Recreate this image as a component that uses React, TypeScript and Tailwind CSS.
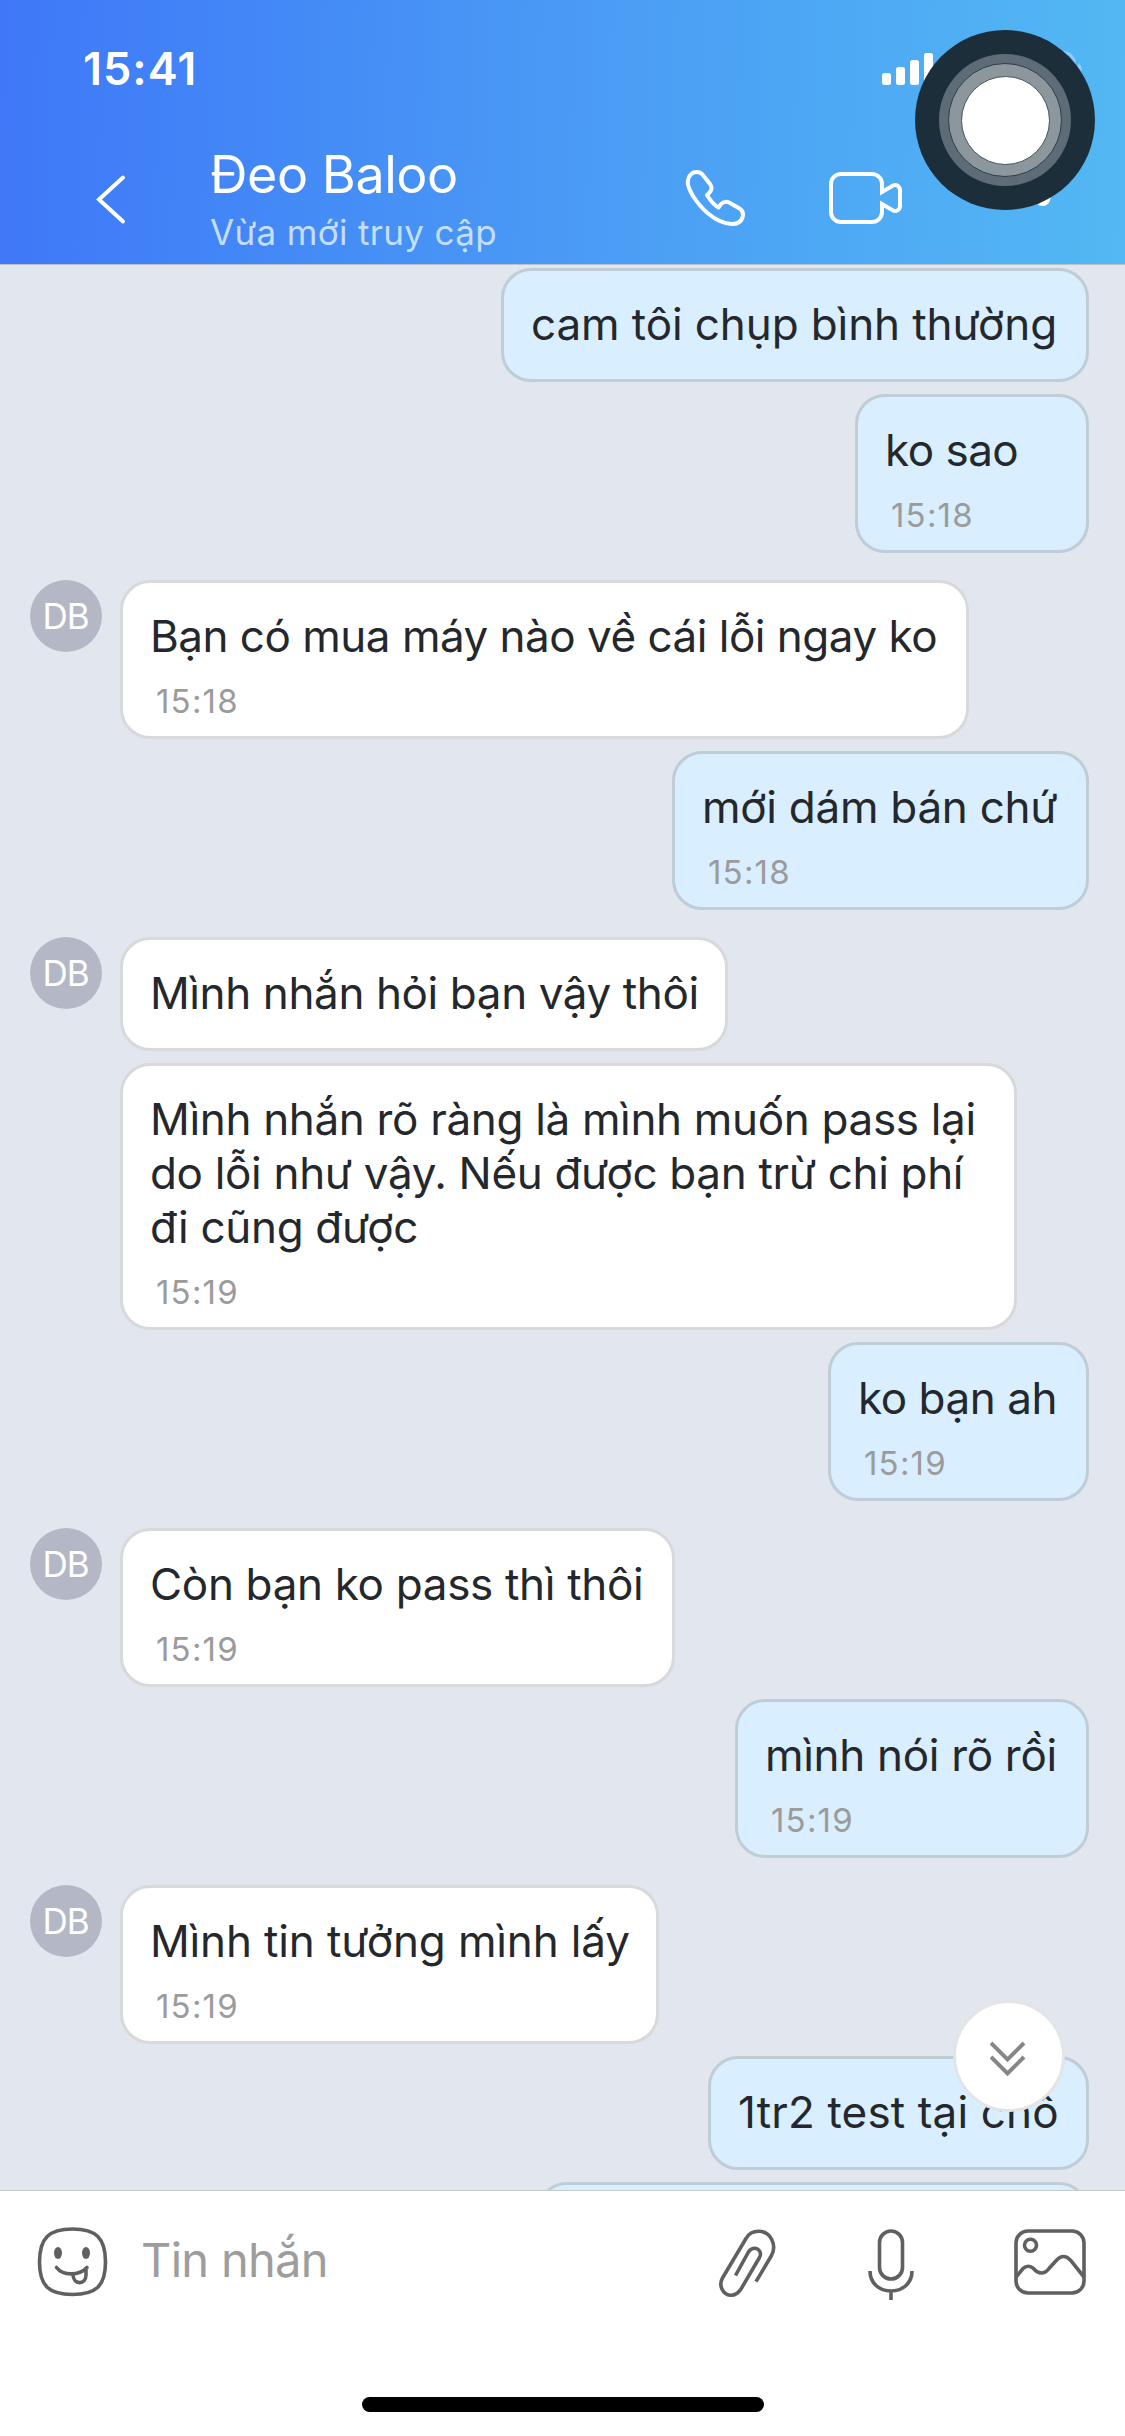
import { clsx } from 'clsx'

interface Message {
  id: number
  text: string
  time?: string
  mine?: boolean
  avatar?: boolean
  className?: string
}

const messages: Message[] = [
  { id: 1, text: 'cam tôi chụp bình thường', mine: true, className: 'w-[588px] tracking-[-0.1px]' },
  { id: 2, text: 'ko sao', time: '15:18', mine: true, className: 'w-[234px] tracking-[-0.5px]' },
  { id: 3, text: 'Bạn có mua máy nào về cái lỗi ngay ko', time: '15:18', avatar: true, className: 'w-[849px] tracking-[-0.5px]' },
  { id: 4, text: 'mới dám bán chứ', time: '15:18', mine: true, className: 'w-[417px] tracking-[-0.26px]' },
  { id: 5, text: 'Mình nhắn hỏi bạn vậy thôi', avatar: true, className: 'w-[608px] tracking-[-0.39px]' },
  {
    id: 6,
    text: 'Mình nhắn rõ ràng là mình muốn pass lại\ndo lỗi như vậy. Nếu được bạn trừ chi phí\nđi cũng được',
    time: '15:19',
    className: 'w-[897px] tracking-[-0.33px]',
  },
  { id: 7, text: 'ko bạn ah', time: '15:19', mine: true, className: 'w-[261px] tracking-[-0.45px]' },
  { id: 8, text: 'Còn bạn ko pass thì thôi', time: '15:19', avatar: true, className: 'w-[555px] tracking-[-0.32px]' },
  { id: 9, text: 'mình nói rõ rồi', time: '15:19', mine: true, className: 'w-[354px] tracking-[-0.31px]' },
  { id: 10, text: 'Mình tin tưởng mình lấy', time: '15:19', avatar: true, className: 'w-[539px] tracking-[-0.14px]' },
  { id: 11, text: '1tr2 test tại chỗ', mine: true, className: 'w-[381px] tracking-[0.15px]' },
  { id: 12, text: '', mine: true, className: 'w-[552px] h-[114px]' },
]

export default function App() {
  return (
    <main className="relative flex h-[2436px] w-[1125px] flex-col overflow-hidden bg-[#e2e6ef] font-['Inter','Noto_Sans',sans-serif]">
      <Header />

      {/* Messages */}
      <section className="relative h-[1925px] overflow-hidden pt-[3px]">
        <div className="flex flex-col gap-3">
          {messages.map((message) => (
            <MessageRow key={message.id} message={message} />
          ))}
        </div>

        <button className="absolute right-[60px] bottom-[78px] flex size-28 items-center justify-center rounded-full border-3 border-[#e3e4e6] bg-white">
          <svg className="mt-1.5 mr-0.5 h-9 w-9" viewBox="0 0 36 36" fill="none" stroke="#878787" strokeWidth={4}>
            <path d="M1 2l16.5 16.5L34 2M1 16l16.5 16.5L34 16" />
          </svg>
        </button>
      </section>

      <Composer />

      {/* AssistiveTouch */}
      <div className="absolute top-[30px] left-[915px] flex size-[180px] items-center justify-center rounded-full bg-[#1c2e3a]">
        <div className="flex size-[132px] items-center justify-center rounded-full bg-[#5d6c76]">
          <div className="flex size-[114px] items-center justify-center rounded-full border border-[#2b3e49] bg-[#8b969d]">
            <div className="size-[89px] rounded-full border border-[#44545e] bg-white" />
          </div>
        </div>
      </div>
    </main>
  )
}

function Header() {
  return (
    <header className="h-[265px] border-b border-[#b9c2cf] bg-linear-92 from-[#3f77f8] via-[#4a9af5] to-[#53b8f3] text-white">
      {/* Status bar */}
      <div className="flex h-[139px] items-start pt-[39px] pr-[42px] pl-[83px]">
        <span className="text-[45px] leading-[60px] font-semibold tracking-[1px]">15:41</span>
        <svg className="mt-[14px] ml-auto h-8 w-[51px]" viewBox="0 0 51 32" fill="currentColor">
          <rect x="0" y="20" width="9" height="12" rx="2.5" />
          <rect x="14" y="14" width="9" height="18" rx="2.5" />
          <rect x="28" y="7" width="9" height="25" rx="2.5" />
          <rect x="42" y="0" width="9" height="32" rx="2.5" />
        </svg>
        <svg className="mt-3 ml-[70px] h-9 w-20" viewBox="0 0 80 36" fill="none">
          <rect x="1.5" y="1.5" width="70" height="33" rx="11" stroke="#86cdfb" strokeWidth={3} />
          <path d="M75 12c5 2 5 10 0 12z" fill="#86cdfb" />
        </svg>
      </div>

      {/* Conversation bar */}
      <div className="flex h-[120px] items-center pr-[74px] pl-[92px]">
        <svg className="h-[58px] w-10" viewBox="0 0 40 58" fill="none" stroke="currentColor" strokeWidth={4} strokeLinecap="round">
          <path d="M31 7.5L7 29.5l24 22" />
        </svg>
        <div className="mt-[5px] ml-[78px] self-start whitespace-nowrap">
          <h1 className="text-[52px] leading-[62px] tracking-[-0.45px]">Đeo Baloo</h1>
          <p className="text-[35px] leading-[52px] tracking-[0.35px] text-[#c4defc]">Vừa mới truy cập</p>
        </div>
        <div className="ml-auto flex items-center gap-[81px]">
          <svg className="size-[62px]" viewBox="0 0 62 62" fill="none" stroke="currentColor" strokeWidth={4} strokeLinejoin="round">
            <path d="M18.5 6.5L26 16C28 19 28 22 25.5 24.5L23 27C26 32 30 37 34.5 39.5L37 36C39 33.5 43 33.5 45 34.5L55.5 40.5C59 42.5 59.5 46 58.5 49.5C57 54 52.5 56 48 56C30 55 16 39 9 28C5 21 3.5 18 3.8 14C4 8 8 4 12.5 4C15 4 17 4.8 18.5 6.5Z" />
          </svg>
          <svg className="h-[62px] w-[77px]" viewBox="0 0 77 62" fill="none" stroke="currentColor" strokeWidth={4}>
            <path d="M55 24V16a10 10 0 0 0-10-10H14A10 10 0 0 0 4 16v28a10 10 0 0 0 10 10h31a10 10 0 0 0 10-10v-8l11 6.5c3.5 1.5 7-1 7-4.500V22.500c0-4-3.500-6.500-7-5z" />
          </svg>
          <svg className="h-[62px] w-[66px]" viewBox="0 0 66 62" fill="currentColor">
            <circle cx="57.5" cy="30" r="8" />
          </svg>
        </div>
      </div>
    </header>
  )
}

function MessageRow({ message }: { message: Message }) {
  const { text, time, mine, avatar, className } = message

  return (
    <div className={clsx('flex', mine ? 'justify-end pr-9' : 'pl-[30px]', avatar && 'mt-[15px]')}>
      {!mine && (
        <div className="mr-[18px] w-[72px]">
          {avatar && (
            <div className="flex size-[72px] items-center justify-center rounded-full bg-[#b4b8c6] pr-px text-[35px] tracking-[-1px] text-white">
              DB
            </div>
          )}
        </div>
      )}
      <div
        className={clsx(
          'rounded-[30px] border-3 pt-[26px] pl-[27px]',
          mine ? 'border-[#bfcdd6] bg-[#d9eefe]' : 'border-[#d8d9da] bg-white',
          time ? 'pb-[15px]' : 'pb-7',
          className
        )}
      >
        <p className="text-[44px] leading-[54px] whitespace-pre text-[#24282d]">{text}</p>
        {time && <p className="mt-[18px] ml-1.5 text-[33px] leading-10 tracking-[1.2px] text-[#9b9b9b]">{time}</p>}
      </div>
    </div>
  )
}

function Composer() {
  return (
    <footer className="h-[246px] border-t border-[#c6c9cd] bg-white text-[#606060]">
      <div className="flex h-[142px] items-center pr-[37px] pl-9">
        <svg className="h-[74px] w-[73px]" viewBox="0 0 73 74" fill="none" stroke="currentColor" strokeWidth={3.6} strokeLinecap="round">
          <path d="M36.5 4C60 4 69.5 13 69.5 37S60 69.5 36.5 69.5 3.5 61 3.5 37 13 4 36.5 4z" />
          <ellipse cx="22" cy="28" rx="4" ry="6" fill="currentColor" stroke="none" />
          <ellipse cx="50" cy="28" rx="4" ry="6" fill="currentColor" stroke="none" />
          <path d="M20.5 42.5C27 51 43 51 51 42.5M37 49.5C37 60 50 60.5 50 50V45" />
        </svg>
        <span className="ml-8 pb-1 text-[47px] tracking-[-0.7px] text-[#9d9d9d]">Tin nhắn</span>

        <svg className="ml-auto h-[74px] w-[61px]" viewBox="0 0 61 74" fill="none" stroke="currentColor" strokeWidth={3.6}>
          <path d="M39 56.7L54.5 30.5C60 20 54 6.3 41.5 6.3C36 6.3 31.5 9 29 13.5L5.5 53C1 61 6.5 70.3 14 70.3C18 70.3 21.5 68 24 64L42.5 32.5C45 28 42 23.3 37.5 23.3C35 23.3 33 24.5 31.5 27L18.5 50.5" />
        </svg>
        <svg className="ml-[88px] h-[76px] w-[50px]" viewBox="0 0 50 76" fill="none" stroke="currentColor" strokeWidth={3.6}>
          <rect x="13.5" y="7" width="23" height="48" rx="11.5" />
          <path d="M4 47c0 12 9 20 21 20s21-8 21-20M25 67v9" />
        </svg>
        <svg className="ml-24 h-[74px] w-[76px]" viewBox="0 0 76 74" fill="none" stroke="currentColor" strokeWidth={3.6}>
          <rect x="4" y="6" width="68" height="62" rx="12" />
          <circle cx="18.5" cy="20.3" r="6" />
          <path d="M4 52l7-8.5c3-3 7.5-3 10.5 0 5 6 11 6 15.5 0l7.5-8.3c4.5-5 9.5-5 14 0L72 52" />
        </svg>
      </div>
      <div className="mx-auto mt-16 h-[15px] w-[402px] rounded-full bg-black" />
    </footer>
  )
}
